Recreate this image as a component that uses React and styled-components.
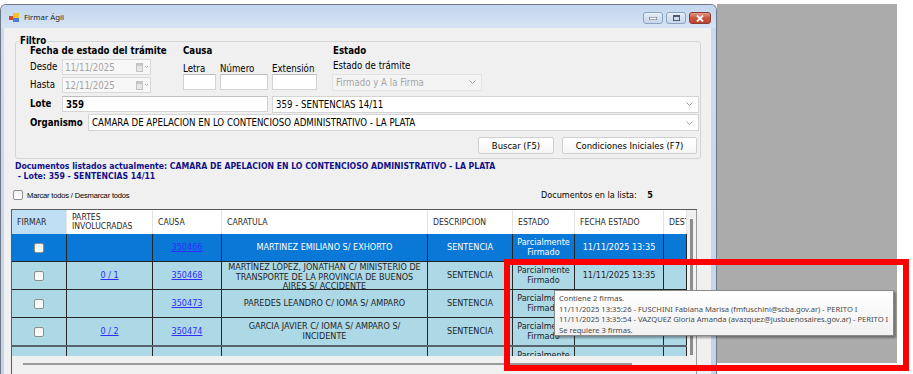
import styled, { createGlobalStyle } from 'styled-components'

const GlobalStyle = createGlobalStyle`
  html, body { margin: 0; padding: 0; background: #ffffff; }
  * { box-sizing: border-box; }
`

const ui = `"DejaVu Sans Condensed", "DejaVu Sans", sans-serif`
const segoe = `"Noto Sans", "Open Sans", sans-serif`
const narrow = `"Liberation Sans Narrow", "DejaVu Sans Condensed", sans-serif`

const cols = '55px 86px 69px 206px 85px 62px 89px 23px'

const Page = styled.div`
  position: relative;
  width: 913px;
  height: 374px;
  overflow: hidden;
  display: flex;
  align-items: flex-start;
  padding-top: 4px;
  font-family: ${ui};
  color: #000;
`

const Window = styled.div`
  width: 717px;
  height: 380px;
  flex-shrink: 0;
  display: flex;
  flex-direction: column;
  border: 1px solid #6f7986;
  border-bottom: none;
  border-radius: 6px 6px 0 0;
  background: linear-gradient(#c4d6ed, #cddcef 40px, #c3d3e8);
`

const Desktop = styled.div`
  width: 180px;
  height: 359px;
  background: #ababab;
`

const TitleBar = styled.div`
  height: 23px;
  display: flex;
  align-items: flex-start;
  padding: 0 5px 0 8px;
  background: linear-gradient(#c3d6ee, #d6e3f3);
  border-radius: 5px 5px 0 0;
`

const AppIcon = styled.svg`
  margin-top: 8px;
  flex-shrink: 0;
`

const Title = styled.span`
  margin: 7px 0 0 4px;
  font-family: ${segoe};
  font-size: 7.8px;
  line-height: 10px;
  color: #1e1e1e;
`

const Controls = styled.div`
  margin: 7px 0 0 auto;
  display: flex;
  gap: 3px;
`

const CtrlButton = styled.div`
  width: ${p => (p.$close ? '22px' : '20px')};
  height: 12px;
  border: 1px solid ${p => (p.$close ? '#8d3b33' : '#8ba2bf')};
  border-radius: 3px;
  background: ${p =>
    p.$close
      ? 'linear-gradient(#e49a8c, #c8553f 50%, #c4442d)'
      : 'linear-gradient(#e8eff8, #d3e0f0 50%, #c7d7ec)'};
  display: flex;
  align-items: center;
  justify-content: center;
`

const Client = styled.div`
  flex: 1;
  margin: 0 5px 0 3px;
  background: #f0f0f0;
  display: flex;
  flex-direction: column;
  min-height: 0;
`

const Group = styled.fieldset`
  margin: 8px 10px 0 11px;
  padding: 0;
  min-width: 0;
  border: 1px solid #d5d5d5;
  border-radius: 3px;
`

const Legend = styled.legend`
  margin-left: 3px;
  padding: 0 1px;
  font-size: 9.6px;
  font-weight: bold;
  line-height: 10px;
`

const GroupBody = styled.div`
  padding: 0 1px 4px 14px;
  display: flex;
  flex-direction: column;
`

const TopGrid = styled.div`
  display: grid;
  grid-template-columns: 153px 150px 1fr;
`

const Column = styled.div`
  display: flex;
  flex-direction: column;
`

const Heading = styled.div`
  font-size: 9.6px;
  font-weight: bold;
  line-height: 10px;
`

const Label = styled.span`
  font-size: 9.6px;
  line-height: 10px;
  width: ${p => p.$w || 'auto'};
  font-weight: ${p => (p.$bold ? 'bold' : 'normal')};
  flex-shrink: 0;
`

const FieldRow = styled.div`
  display: flex;
  align-items: center;
  height: ${p => p.$h || '16px'};
  margin-top: ${p => p.$mt || '0px'};
`

const DateBox = styled.div`
  width: 89px;
  height: 16px;
  border: 1px solid #d9d9d9;
  background: #f7f7f7;
  color: #a3a3a3;
  font-size: 9.6px;
  display: flex;
  align-items: center;
  padding-left: 2px;
  justify-content: space-between;
`

const CausaGrid = styled.div`
  display: grid;
  grid-template-columns: 33px 48px 45px;
  column-gap: 4px;
  margin-top: 8px;
`

const Input = styled.div`
  height: ${p => p.$h || '16px'};
  width: ${p => p.$w || 'auto'};
  background: #fff;
  border: 1px solid #d3d3d3;
  border-top-color: #bdbdbd;
  font-size: 9.6px;
  font-weight: ${p => (p.$bold ? 'bold' : 'normal')};
  display: flex;
  align-items: center;
  padding-left: 3px;
  flex-shrink: 0;
`

const Combo = styled.div`
  height: ${p => p.$h || '17px'};
  width: ${p => p.$w || 'auto'};
  flex: ${p => (p.$w ? '0 0 auto' : '1')};
  margin-left: ${p => p.$ml || '0px'};
  background: ${p => (p.$disabled ? '#f4f4f4' : '#fff')};
  color: ${p => (p.$disabled ? '#a6a6a6' : '#000')};
  border: 1px solid ${p => (p.$disabled ? '#e3e3e3' : '#d4d4d4')};
  font-size: 9.6px;
  display: flex;
  align-items: center;
  justify-content: space-between;
  padding: 0 5px 0 3px;
`

const ButtonRow = styled.div`
  display: flex;
  justify-content: flex-end;
  gap: 8px;
  margin: 6px 2px 0 0;
`

const Button = styled.div`
  width: ${p => p.$w};
  height: 17px;
  border: 1px solid #cfcfcf;
  border-radius: 2px;
  background: linear-gradient(#ffffff, #f6f6f6);
  font-size: 9.4px;
  display: flex;
  align-items: center;
  justify-content: center;
`

const Info = styled.div`
  margin: 3px 0 0 11px;
  color: #10108a;
  font-size: 8.65px;
  font-weight: bold;
  line-height: 9.5px;
  white-space: pre;
`

const ToolRow = styled.div`
  display: flex;
  align-items: center;
  height: 12px;
  margin: 8px 0 0 9px;
`

const Check = styled.span`
  width: 10px;
  height: 10px;
  border: 1px solid #8e8f8f;
  border-radius: 2px;
  background: linear-gradient(#f2f2f2, #ffffff);
  flex-shrink: 0;
`

const Small = styled.span`
  margin-left: 4px;
  font-family: "Liberation Sans", sans-serif;
  font-size: 7.6px;
  letter-spacing: -0.2px;
`

const Count = styled.span`
  margin-left: auto;
  margin-right: 58px;
  font-size: 9px;
  & b { margin-left: 8px; }
`

const GridFrame = styled.div`
  margin: 8px 0 0 7px;
  width: 686px;
  height: 170px;
  border-left: 1px solid #5b5b5b;
  border-top: 1px solid #5b5b5b;
  display: grid;
  grid-template-columns: 675px 10px;
  grid-template-rows: 146px 1fr;
  background: #f0f0f0;
`

const Table = styled.div`
  grid-column: 1;
  grid-row: 1;
  overflow: hidden;
  display: flex;
  flex-direction: column;
`

const HeaderRow = styled.div`
  display: grid;
  grid-template-columns: ${cols};
  height: 24px;
  flex-shrink: 0;
  background: #fff;
`

const HeaderCell = styled.div`
  background: ${p => (p.$active ? '#bfdff5' : '#fff')};
  border-right: 1px solid #e4e4e4;
  font-family: ${narrow};
  font-size: 8.6px;
  line-height: 9px;
  color: #2a2a2a;
  display: flex;
  align-items: center;
  padding-left: 5px;
  white-space: pre;
  overflow: hidden;
`

const Row = styled.div`
  display: grid;
  grid-template-columns: ${cols};
  height: ${p => (p.$thick ? '29px' : '28px')};
  flex-shrink: 0;
  background: ${p => (p.$selected ? '#0a78d6' : '#add8e6')};
  color: ${p => (p.$selected ? '#ffffff' : '#1e1e1e')};
  border-bottom: ${p => (p.$thick ? '2px solid #55656b' : '1px solid #262626')};
`

const Cell = styled.div`
  border-right: 1px solid #262626;
  display: flex;
  align-items: safe center;
  justify-content: center;
  text-align: center;
  padding: 1px 3px 0;
  font-size: 9px;
  line-height: 9.6px;
  white-space: pre-line;
  overflow: hidden;
`

const Link = styled.span`
  color: #2e2eff;
  text-decoration: underline;
`

const VScroll = styled.div`
  grid-column: 2;
  grid-row: 1 / 3;
  background: #f0f0f0;
  display: flex;
  justify-content: center;
  padding-top: 9px;
  border-right: 1px solid #9a9a9a;
`

const VThumb = styled.div`
  width: 3px;
  height: 136px;
  background: #8c8c8c;
`

const HScroll = styled.div`
  grid-column: 1;
  grid-row: 2;
  padding: 7px 0 0 11px;
`

const HThumb = styled.div`
  width: 609px;
  height: 2px;
  background: #9a9a9a;
`

const Tooltip = styled.div`
  position: absolute;
  left: 554px;
  top: 290px;
  width: 340px;
  height: 46px;
  padding: 2px 0 0 4px;
  background: linear-gradient(#ffffff, #f1f1f1);
  border: 1px solid #8a8a8a;
  box-shadow: 2px 2px 2px rgba(0, 0, 0, 0.35);
  font-family: ${segoe};
  font-size: 7.6px;
  line-height: 10.6px;
  color: #4a4a4a;
  white-space: pre;
`

const Highlight = styled.div`
  position: absolute;
  left: 504px;
  top: 259px;
  width: 405px;
  height: 112px;
  border: 6px solid #ff0000;
`

const Chevron = () => (
  <svg width="7" height="4" viewBox="0 0 7 4">
    <polyline points="0.5,0.5 3.5,3.5 6.5,0.5" fill="none" stroke="#9c9c9c" strokeWidth="1" />
  </svg>
)

const CalendarIcon = () => (
  <svg width="14" height="9" viewBox="0 0 14 9">
    <rect x="0.5" y="0.5" width="6" height="8" fill="#e6e6e6" stroke="#c2c2c2" />
    <rect x="1" y="1" width="5" height="2" fill="#c9c9c9" />
    <polyline points="9,3 10.5,4.5 12,3" fill="none" stroke="#b0b0b0" />
  </svg>
)

const rows = [
  { selected: true, partes: '', causa: '350466', caratula: 'MARTINEZ EMILIANO S/ EXHORTO' },
  { partes: '0 / 1', causa: '350468', caratula: 'MARTÍNEZ LÓPEZ, JONATHAN C/ MINISTERIO DE\nTRANSPORTE DE LA PROVINCIA DE BUENOS\nAIRES S/ ACCIDENTE' },
  { partes: '', causa: '350473', caratula: 'PAREDES LEANDRO C/ IOMA S/ AMPARO' },
  { partes: '0 / 2', causa: '350474', caratula: 'GARCIA JAVIER C/ IOMA S/ AMPARO S/\nINCIDENTE', thick: true },
  { partes: '', causa: '', caratula: '', blank: true },
]

const headers = ['FIRMAR', 'PARTES\nINVOLUCRADAS', 'CAUSA', 'CARATULA', 'DESCRIPCION', 'ESTADO', 'FECHA ESTADO', 'DESTINATARIO']

export default function App() {
  return (
    <Page>
      <GlobalStyle />
      <Window>
        <TitleBar>
          <AppIcon width="11" height="9" viewBox="0 0 11 9">
            <rect x="0" y="3" width="4" height="4" fill="#d8442c" />
            <rect x="4" y="0" width="6" height="5" fill="#f2c230" />
            <rect x="4" y="5" width="6" height="4" fill="#4b7fd0" />
          </AppIcon>
          <Title>Firmar Ágil</Title>
          <Controls>
            <CtrlButton>
              <svg width="8" height="3"><rect x="0" y="0" width="8" height="3" fill="#fff" stroke="#4b5a6e" strokeWidth="1" /></svg>
            </CtrlButton>
            <CtrlButton>
              <svg width="7" height="6"><rect x="0.5" y="0.5" width="6" height="5" fill="none" stroke="#4b5a6e" /><rect x="1" y="1" width="5" height="1" fill="#4b5a6e" /></svg>
            </CtrlButton>
            <CtrlButton $close>
              <svg width="8" height="7" viewBox="0 0 8 7">
                <path d="M1 0.5 L7 6.5 M7 0.5 L1 6.5" stroke="#fff" strokeWidth="1.8" />
              </svg>
            </CtrlButton>
          </Controls>
        </TitleBar>
        <Client>
          <Group>
            <Legend>Filtro</Legend>
            <GroupBody>
              <TopGrid>
                <Column>
                  <Heading>Fecha de estado del trámite</Heading>
                  <FieldRow $mt="3px">
                    <Label $w="32px">Desde</Label>
                    <DateBox>11/11/2025<CalendarIcon /></DateBox>
                  </FieldRow>
                  <FieldRow $mt="2px">
                    <Label $w="32px">Hasta</Label>
                    <DateBox>12/11/2025<CalendarIcon /></DateBox>
                  </FieldRow>
                </Column>
                <Column>
                  <Heading>Causa</Heading>
                  <CausaGrid>
                    <Label>Letra</Label>
                    <Label>Número</Label>
                    <Label>Extensión</Label>
                    <Input />
                    <Input />
                    <Input />
                  </CausaGrid>
                </Column>
                <Column>
                  <Heading>Estado</Heading>
                  <FieldRow $h="10px" $mt="5px">
                    <Label>Estado de trámite</Label>
                  </FieldRow>
                  <FieldRow $mt="3px">
                    <Combo $w="150px" $ml="-1px" $disabled>Firmado y A la Firma<Chevron /></Combo>
                  </FieldRow>
                </Column>
              </TopGrid>
              <FieldRow $mt="3px" $h="16px">
                <Label $w="32px" $bold>Lote</Label>
                <Input $w="206px" $bold>359</Input>
                <Combo $ml="4px">359 - SENTENCIAS 14/11<Chevron /></Combo>
              </FieldRow>
              <FieldRow $mt="2px" $h="17px">
                <Label $w="58px" $bold>Organismo</Label>
                <Combo>CAMARA DE APELACION EN LO CONTENCIOSO ADMINISTRATIVO - LA PLATA<Chevron /></Combo>
              </FieldRow>
              <ButtonRow>
                <Button $w="76px">Buscar (F5)</Button>
                <Button $w="135px">Condiciones Iniciales (F7)</Button>
              </ButtonRow>
            </GroupBody>
          </Group>
          <Info>{'Documentos listados actualmente: CAMARA DE APELACION EN LO CONTENCIOSO ADMINISTRATIVO - LA PLATA\n - Lote: 359 - SENTENCIAS 14/11'}</Info>
          <ToolRow>
            <Check />
            <Small>Marcar todos / Desmarcar todos</Small>
            <Count>Documentos en la lista: <b>5</b></Count>
          </ToolRow>
          <GridFrame>
            <Table>
              <HeaderRow>
                {headers.map((h, i) => (
                  <HeaderCell key={h} $active={i === 0}>{h}</HeaderCell>
                ))}
              </HeaderRow>
              {rows.map((r, i) => (
                <Row key={i} $selected={r.selected} $thick={r.thick}>
                  <Cell>{!r.blank && <Check />}</Cell>
                  <Cell>{r.partes && <Link>{r.partes}</Link>}</Cell>
                  <Cell>{r.causa && <Link>{r.causa}</Link>}</Cell>
                  <Cell>{r.caratula}</Cell>
                  <Cell>{!r.blank && 'SENTENCIA'}</Cell>
                  <Cell>{'Parcialmente\nFirmado'}</Cell>
                  <Cell>{!r.blank && '11/11/2025 13:35'}</Cell>
                  <Cell />
                </Row>
              ))}
            </Table>
            <VScroll><VThumb /></VScroll>
            <HScroll><HThumb /></HScroll>
          </GridFrame>
        </Client>
      </Window>
      <Desktop />
      <Tooltip>{'Contiene 2 firmas.\n11/11/2025 13:35:26 - FUSCHINI Fabiana Marisa (fmfuschini@scba.gov.ar) - PERITO I\n11/11/2025 13:35:54 - VAZQUEZ Gloria Amanda (avazquez@jusbuenosaires.gov.ar) - PERITO I\nSe requiere 3 firmas.'}</Tooltip>
      <Highlight />
    </Page>
  )
}
